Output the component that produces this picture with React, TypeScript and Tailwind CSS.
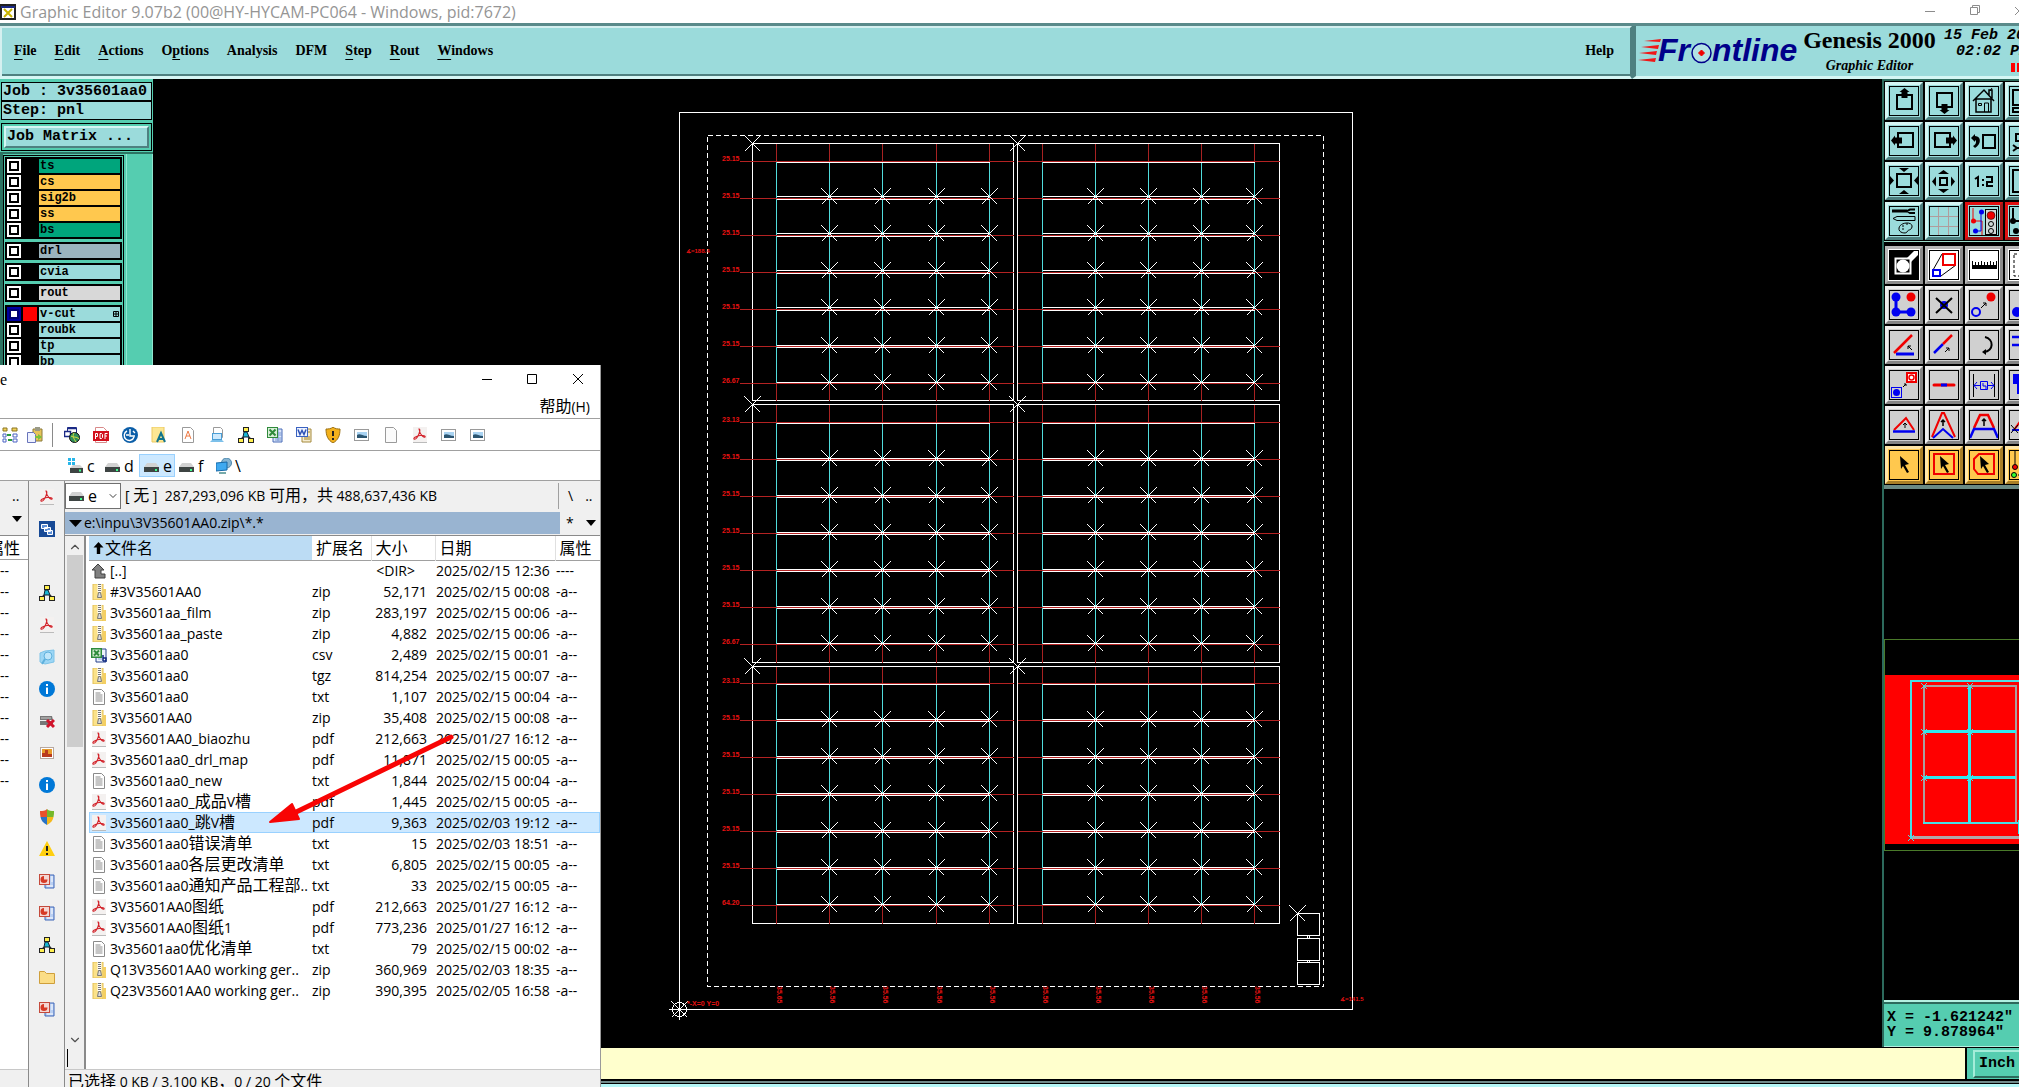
import type { ReactNode } from "react";
import { ChevronDown, ChevronUp } from "lucide-react";

const RED = "#f00000";
const BLUE = "#0000f0";

/* ---------- data ---------- */

const MENUS = [
  ["", "F", "ile"],
  ["", "E", "dit"],
  ["", "A", "ctions"],
  ["O", "p", "tions"],
  ["Analysis", "", ""],
  ["DFM", "", ""],
  ["", "S", "tep"],
  ["", "R", "out"],
  ["", "W", "indows"],
];

type Layer = { name: string; bg: string; active?: boolean };

const LAYER_GROUPS: Layer[][] = [
  [
    { name: "ts", bg: "bg-[#00a57c]" },
    { name: "cs", bg: "bg-[#ffc84e]" },
    { name: "sig2b", bg: "bg-[#ffc84e]" },
    { name: "ss", bg: "bg-[#ffc84e]" },
    { name: "bs", bg: "bg-[#00a57c]" },
  ],
  [{ name: "drl", bg: "bg-[#9ab4be]" }],
  [{ name: "cvia", bg: "bg-[#9bdbdb]" }],
  [{ name: "rout", bg: "bg-[#d8d8d8]" }],
  [
    { name: "v-cut", bg: "bg-[#9bdbdb]", active: true },
    { name: "roubk", bg: "bg-[#9bdbdb]" },
    { name: "tp", bg: "bg-[#9bdbdb]" },
    { name: "bp", bg: "bg-[#9bdbdb]" },
  ],
];

const FILES = [
  ["up", "[..]", "", "<DIR>", "2025/02/15 12:36", "----"],
  ["zip", "#3V35601AA0", "zip", "52,171", "2025/02/15 00:08", "-a--"],
  ["zip", "3v35601aa_film", "zip", "283,197", "2025/02/15 00:06", "-a--"],
  ["zip", "3v35601aa_paste", "zip", "4,882", "2025/02/15 00:06", "-a--"],
  ["csv", "3v35601aa0", "csv", "2,489", "2025/02/15 00:01", "-a--"],
  ["zip", "3v35601aa0", "tgz", "814,254", "2025/02/15 00:07", "-a--"],
  ["txt", "3v35601aa0", "txt", "1,107", "2025/02/15 00:04", "-a--"],
  ["zip", "3V35601AA0", "zip", "35,408", "2025/02/15 00:08", "-a--"],
  ["pdf", "3V35601AA0_biaozhu", "pdf", "212,663", "2025/01/27 16:12", "-a--"],
  ["pdf", "3v35601aa0_drl_map", "pdf", "11,871", "2025/02/15 00:05", "-a--"],
  ["txt", "3v35601aa0_new", "txt", "1,844", "2025/02/15 00:04", "-a--"],
  ["pdf", "3v35601aa0_成品V槽", "pdf", "1,445", "2025/02/15 00:05", "-a--"],
  ["pdf", "3v35601aa0_跳V槽", "pdf", "9,363", "2025/02/03 19:12", "-a--"],
  ["txt", "3v35601aa0错误清单", "txt", "15", "2025/02/03 18:51", "-a--"],
  ["txt", "3v35601aa0各层更改清单", "txt", "6,805", "2025/02/15 00:05", "-a--"],
  ["txt", "3v35601aa0通知产品工程部..", "txt", "33", "2025/02/15 00:05", "-a--"],
  ["pdf", "3V35601AA0图纸", "pdf", "212,663", "2025/01/27 16:12", "-a--"],
  ["pdf", "3V35601AA0图纸1", "pdf", "773,236", "2025/01/27 16:12", "-a--"],
  ["txt", "3v35601aa0优化清单", "txt", "79", "2025/02/15 00:02", "-a--"],
  ["zip", "Q13V35601AA0 working ger..", "zip", "360,969", "2025/02/03 18:35", "-a--"],
  ["zip", "Q23V35601AA0 working ger..", "zip", "390,395", "2025/02/05 16:58", "-a--"],
];
const SELECTED_ROW = 12;

/* ---------- file manager icons, 16x16 ---------- */

const ICONS: Record<string, ReactNode> = {
  up: <path d="M7 1l6 6h-3v4h4v4H4V7H1z" fill="#808080" stroke="#404040" />,
  zip: (
    <>
      <path d="M2 0h10v16H2z" fill="#fbe28a" stroke="#e3bf55" />
      <path d="M12 5h3v11h-3z" fill="#f4cf63" />
      <path d="M8.500 0v8" stroke="#fff" strokeWidth="4" />
      <path d="M8.500 0v8" stroke="#777" strokeWidth="3" strokeDasharray="1 1" />
      <path d="M7.500 8.500h2l1 5h-4z" fill="#ddd" stroke="#777" />
    </>
  ),
  csv: (
    <>
      <path d="M5 2h10v13H5z" fill="#eef3fb" stroke="#27408b" />
      <path d="M7 12h4" stroke="#8aa6d8" />
      <rect x="0" y="1" width="11" height="10" fill="#2e8b3c" />
      <rect x="1.500" y="2.500" width="8" height="7" fill="#d9efd8" />
      <path d="M3 3.500l5 5M8 3.500l-5 5" stroke="#2e8b3c" strokeWidth="2" />
      <path d="M12 8v6M12 11h3v3h-3" fill="none" stroke="#102a80" strokeWidth="1.5" />
    </>
  ),
  txt: (
    <>
      <path d="M2.5.5h8l3 3v12h-11z" fill="#fff" stroke="#8a8a8a" />
      <path d="M4.5 4h5M4.5 6h7M4.5 8h7M4.5 10h7M4.5 12h7" stroke="#8c8c8c" />
    </>
  ),
  pdf: (
    <>
      <rect x="1" y="0" width="14" height="15" fill="#f4f1f0" />
      <path d="M1 15.5h14" stroke="#bbb" />
      <path d="M7 2c2 0 0 5-1 7s-3 4-4 3 3-3 6-3.500 6 .5 5 1.500-5-2-6-8z" fill="none" stroke="#d3222a" strokeWidth="1.100" />
    </>
  ),
  blank: <path d="M2.500.5h8l3 3v12h-11z" fill="#fbfbfb" stroke="#9a9a9a" />,
  fontdoc: (
    <>
      <path d="M2.500.5h8l3 3v12h-11z" fill="#fff" stroke="#9a9a9a" />
      <path d="M5 12l3-8 3 8M6 9h4" fill="none" stroke="#ee7a45" />
    </>
  ),
  font: (
    <>
      <path d="M1 0h12v15H1z" fill="#fce794" stroke="#ecc961" />
      <path d="M6 15l4-9 4 9M8 12h5" fill="none" stroke="#11748c" strokeWidth="2" />
    </>
  ),
  pdfred: (
    <>
      <path d="M2.500.5h8l3 3v12h-11z" fill="#fff" stroke="#d98a8a" />
      <rect x="0" y="4" width="16" height="10" fill="#d2101d" />
      <path d="M2.500 12V6.500h2v3h-2M7 6.500v5h1.500l1-1v-3l-1-1zM12 12V6.500h2.500M12 9h2" fill="none" stroke="#fff" />
    </>
  ),
  sync: (
    <>
      <circle cx="8" cy="8" r="8" fill="#0b5ea8" />
      <path d="M8 2v7h5M5 4a5 5 0 1 0 7 6M4 8h3M11 4l2 2" fill="none" stroke="#fff" strokeWidth="1.400" />
    </>
  ),
  laptop: (
    <>
      <path d="M4.500.5h7l2 2v8h-9z" fill="#fff" stroke="#9a9a9a" />
      <rect x="3.500" y="6.500" width="9" height="6" fill="#cfeafd" stroke="#4b9fd6" />
      <path d="M1 15l2-2h10l2 2z" fill="#7cc0ea" />
    </>
  ),
  tree: (
    <>
      <path d="M8 4v5M3 12l5-4 5 4" fill="none" stroke="#222" strokeWidth="1.500" />
      <path d="M6 5h3l2 5H5z" fill="#19b6d2" stroke="#123" />
      <rect x="5.500" y=".5" width="5" height="4" fill="#ffef4e" stroke="#222" />
      <rect x=".5" y="11.500" width="5" height="4" fill="#ffef4e" stroke="#222" />
      <rect x="10.500" y="11.500" width="5" height="4" fill="#ffef4e" stroke="#222" />
    </>
  ),
  excel: (
    <>
      <path d="M6 2h9v13H6z" fill="#dbe6fa" stroke="#4b6cb8" />
      <path d="M10 6h5M10 8h5M8 11h7M8 13h7M11 3v11" stroke="#7c9ad2" />
      <rect x=".5" y=".5" width="10" height="10" fill="#d9efd8" stroke="#2f8a3b" />
      <path d="M2.500 2.500l6 6M8.500 2.500l-6 6" stroke="#2f8a3b" strokeWidth="2" />
    </>
  ),
  word: (
    <>
      <path d="M6 2h9v13H6z" fill="#f6ecd0" stroke="#a58a3c" />
      <path d="M8 12h6M8 10h6M12 5h2" stroke="#c0a559" strokeWidth="1.500" />
      <rect x=".5" y=".5" width="11" height="9" fill="#eef3ff" stroke="#3a62c0" />
      <path d="M2 2.500l2 5 2-4 2 4 2-5" fill="none" stroke="#2b50b4" strokeWidth="1.500" />
    </>
  ),
  ppt: (
    <>
      <path d="M6 2h9v13H6z" fill="#b9cff2" stroke="#3e67b8" />
      <path d="M12 4h2M12 6h2M12 8h2M8 13h6" stroke="#fff" />
      <rect x=".5" y="1.500" width="10" height="10" fill="#f4d7d3" stroke="#c44a3c" />
      <path d="M5 3a3.500 3.500 0 1 0 3.500 3.500H5z" fill="#d63a26" />
    </>
  ),
  shield: (
    <>
      <path d="M8 0c2 2 5 2 7 2 0 7-2 11-7 14C3 13 1 9 1 2c2 0 5 0 7-2z" fill="#f3b11c" stroke="#9a6f10" />
      <path d="M8 4v5M8 11v2" stroke="#222" strokeWidth="2" />
    </>
  ),
  picture: (
    <>
      <rect x=".5" y="2.500" width="14" height="11" fill="#fff" stroke="#9a9a9a" />
      <path d="M3 5h10v6H3z" fill="#a9d3f2" />
      <path d="M3 8c3-2 5 1 10 1v2H3z" fill="#2c5570" />
    </>
  ),
  globe: (
    <>
      <path d="M3.500.5h9v7h-9z" fill="#fff" stroke="#1b2a86" />
      <path d="M.5 4.500h6v5h-6zM3 1.500h9" fill="#fff" stroke="#1b2a86" strokeWidth="1.500" />
      <circle cx="10.500" cy="10.500" r="5" fill="#2f8f5a" stroke="#111" />
      <path d="M7 9c3 2 5 0 8 3M10 6c-2 3 0 6 2 9" fill="none" stroke="#d8dc40" />
    </>
  ),
  grid: (
    <>
      <path d="M1 1h4v3H1zM10 1h5v3h-5z" fill="#f2d25c" stroke="#8a7420" />
      <path d="M1 7h3v3H1zM11 7h4v3h-4zM1 12h3v3H1zM11 12h4v3h-4z" fill="#fff" stroke="#4b62c4" />
      <path d="M5 8h4M10 13H6" stroke="#2c9c3d" strokeWidth="2" />
    </>
  ),
  paste: (
    <>
      <path d="M6 2h9v12H6z" fill="#e6c35a" stroke="#8b7a3c" />
      <path d="M8 0h5v4H8z" fill="#9a9a86" />
      <path d="M.5 5.500h6l2 2v8h-8z" fill="#eef1ff" stroke="#6874ba" />
      <path d="M8 9h3V7l4 3-4 3v-2H8z" fill="#79c23c" />
    </>
  ),
  windows: (
    <>
      <rect width="16" height="16" fill="#174a96" />
      <path d="M2.500 3.500h6v4h-6zM5.500 6.500h6v4h-6zM8.500 9.500h5v4h-5z" fill="#5d8fd6" stroke="#fff" />
    </>
  ),
  search: (
    <>
      <path d="M1 4l5-2 9-1v12l-9 2-5-2z" fill="#9cd6f5" stroke="#7cc3e8" />
      <circle cx="9" cy="7" r="4" fill="#bfe6fa" stroke="#5fb0dc" />
      <path d="M6 10l-3 5" stroke="#5fb0dc" strokeWidth="2" />
    </>
  ),
  info: (
    <>
      <circle cx="8" cy="8" r="8" fill="#0078d7" />
      <path d="M8 6.500V13M8 3v2" stroke="#fff" strokeWidth="2" />
    </>
  ),
  server: (
    <>
      <path d="M1 3h12l1 4H1zM1 8h13v4H1z" fill="#777" />
      <path d="M2 5h10" stroke="#ccc" />
      <path d="M8 7l7 7M15 7l-7 7" stroke="#d1132b" strokeWidth="3" />
    </>
  ),
  photo: (
    <>
      <rect x="1.500" y="2.500" width="13" height="11" fill="#fff" stroke="#b7a8a0" />
      <rect x="3" y="4" width="10" height="8" fill="#e79a2a" />
      <path d="M3 12V8h3v-3h3v4h4v3z" fill="#b93a1e" />
    </>
  ),
  uac: (
    <>
      <path d="M8 0v8H1.500C1 6 1 4 1 2c3 0 5 0 7-2z" fill="#e8512b" />
      <path d="M8 0v8h6.500C15 6 15 4 15 2c-3 0-5 0-7-2z" fill="#76b82a" />
      <path d="M8 8v8c-4-2-6-5-6.500-8z" fill="#2a73c5" />
      <path d="M8 8v8c4-2 6-5 6.500-8z" fill="#f5b81b" />
    </>
  ),
  warn: (
    <>
      <path d="M8 0l8 15H0z" fill="#ffcf10" />
      <path d="M8 5v5M8 12v2" stroke="#222" strokeWidth="2" />
    </>
  ),
  folder: <path d="M.5 2.500h5l2 2h8v10H.5z" fill="#fbdd86" stroke="#cf9f3b" />,
  drive: (
    <>
      <path d="M3 5h9l3 4H0z" fill="#d2d2d2" />
      <path d="M0 9h15v5H0z" fill="#3e4443" />
      <path d="M11 12h2" stroke="#3dff8c" strokeWidth="2" />
    </>
  ),
  sysdrive: (
    <>
      <path d="M0 0h3v3H0zM4 0h3v3H4zM0 4h3v3H0zM4 4h3v3H4z" fill="#27b6ea" />
      <path d="M5 7h7l3 3H2z" fill="#d2d2d2" />
      <path d="M2 10h13v5H2z" fill="#3e4443" />
      <path d="M11 12.500h2" stroke="#3dff8c" strokeWidth="2" />
    </>
  ),
  network: (
    <>
      <circle cx="10.500" cy="5" r="5" fill="#86b4d2" stroke="#4a86ac" />
      <path d="M0 5l11-1v8L0 13z" fill="#3fa9f0" stroke="#1769a8" />
      <path d="M3 15h7" stroke="#7aa" strokeWidth="2" />
    </>
  ),
};

function FileIcon({ name }: { name: string }) {
  return (
    <svg width="16" height="16" viewBox="0 0 16 16" className="shrink-0" aria-hidden>
      {ICONS[name]}
    </svg>
  );
}

/* ---------- editor tool icons, 30x30 ---------- */

const traffic = (
  <>
    <path d="M4 2v13h9v14M4 2" fill="none" stroke={RED} />
    <path d="M12 5v20H6" fill="none" stroke={BLUE} />
    <circle cx="4.500" cy="15" r="2.500" fill={RED} />
    <circle cx="12.500" cy="6" r="2.500" fill={BLUE} />
    <circle cx="6.500" cy="25" r="2.500" fill={BLUE} />
    <rect x="16.500" y="3.500" width="11" height="25" fill="#d0d8d8" stroke="#000" />
    <circle cx="22" cy="9.500" r="4" fill={RED} stroke="#000" strokeWidth=".5" />
    <circle cx="22" cy="18" r="2.500" fill="none" stroke="#000" />
    <circle cx="22" cy="25" r="2.500" fill="none" stroke="#000" />
  </>
);

const TOP_TOOLS: { label: string; art: ReactNode; hot?: boolean }[] = [
  {
    label: "Pan up",
    art: (
      <>
        <rect x="8" y="9" width="15" height="14" fill="none" stroke="#000" strokeWidth="2" />
        <path d="M15.500 2l5 4h-2v6h-6V6h-2z" />
      </>
    ),
  },
  {
    label: "Pan down",
    art: (
      <>
        <rect x="8" y="7" width="15" height="14" fill="none" stroke="#000" strokeWidth="2" />
        <path d="M15.500 28l5-4h-2v-6h-6v6h-2z" />
      </>
    ),
  },
  {
    label: "Home",
    art: (
      <>
        <path d="M4 15L15 4l10 11M7 13v13h15V13H7M20 9V4h3v8" fill="none" stroke="#000" strokeWidth="1.500" />
        <path d="M9.500 17.500h3v2h-3zM15.500 26v-9h4v9M21 5l2-3" fill="none" stroke="#000" />
      </>
    ),
  },
  { label: "Window", art: <path d="M4 4h22v15H4zM4 22h22v4H4z" fill="none" stroke="#000" strokeWidth="2" /> },
  {
    label: "Pan left",
    art: (
      <>
        <rect x="9" y="7" width="15" height="14" fill="none" stroke="#000" strokeWidth="2" />
        <path d="M2 14.500l4-5v2h7v6H6v2z" />
      </>
    ),
  },
  {
    label: "Pan right",
    art: (
      <>
        <rect x="6" y="7" width="15" height="14" fill="none" stroke="#000" strokeWidth="2" />
        <path d="M28 14.500l-4-5v2h-7v6h7v2z" />
      </>
    ),
  },
  {
    label: "Previous view",
    art: (
      <>
        <rect x="14" y="9" width="12" height="13" fill="none" stroke="#000" strokeWidth="2" />
        <path d="M2 12l4-4v2c7 0 6 9 0 12l-2-2c3-1 4-5 2-6v2z" />
      </>
    ),
  },
  { label: "Zoom", art: <path d="M7 8h12v7H7zM4 19l4 3-4 3M8 22h16" fill="none" stroke="#000" strokeWidth="2" /> },
  {
    label: "Zoom out",
    art: (
      <>
        <rect x="8" y="8" width="14" height="13" fill="none" stroke="#000" strokeWidth="2" />
        <path d="M15 6l-5-4h10zM15 24l-5 4h10zM5 14.500L1 10v9zM25 14.500l4-4.500v9z" />
      </>
    ),
  },
  {
    label: "Zoom in",
    art: (
      <>
        <rect x="11" y="12" width="7" height="7" fill="none" stroke="#000" strokeWidth="2" />
        <path d="M14.500 4L9 8h11zM14.500 27L9 23h11zM3 15.500l4-5v10zM26 15.500l-4-5v10z" />
      </>
    ),
  },
  {
    label: "Scale 1:2",
    art: <path d="M6 13l3-2v10M13 14h2M13 19h2M17 11h6v5h-5v4h6" fill="none" stroke="#000" strokeWidth="2" />,
  },
  { label: "Fit", art: <path d="M4 4h22v22H4z" fill="none" stroke="#000" strokeWidth="2" /> },
  {
    label: "Attributes",
    art: (
      <>
        <path d="M3 5h15" stroke="#000" strokeWidth="3" />
        <path d="M26 3.500h-5l-3 1.500 3 2h5" fill="none" stroke="#000" strokeWidth="2" />
        <path d="M4 12.500l4-2h18v4H8zM10 22c1-6 14-7 13-1-1 4-4 2-5 5-1 2-9 1-8-4z" fill="none" stroke="#000" />
        <path d="M13 20h2M17 18h2M13 23h2" stroke="#000" />
      </>
    ),
  },
  { label: "Grid", art: <path d="M9.500 0v30M19.500 0v30M0 10.500h30M0 20.500h30" stroke="#b09c9c" /> },
  { label: "Snap", hot: true, art: traffic },
  {
    label: "Snap off",
    hot: true,
    art: (
      <>
        <path d="M4 2v13h10V11" fill="none" stroke="#000" strokeWidth="2" />
        <circle cx="4" cy="15" r="3" />
        <circle cx="7" cy="25" r="3" />
      </>
    ),
  },
];

const EDIT_TOOLS: { label: string; art: ReactNode; tone?: "white" | "gold" }[] = [
  {
    label: "Negative",
    tone: "white",
    art: (
      <>
        <rect width="30" height="30" />
        <path d="M18 8l7-7h4v4l-7 7z" fill="#fff" />
        <rect x="6.500" y="8.500" width="15" height="15" stroke="#fff" strokeWidth="2" />
        <circle cx="14" cy="16" r="6.500" fill="#fff" />
      </>
    ),
  },
  {
    label: "Resize",
    tone: "white",
    art: (
      <>
        <path d="M4 20L13 4M12 26l15-11" stroke="#000" />
        <rect x="14" y="4" width="12" height="11" fill="none" stroke={RED} strokeWidth="2" />
        <rect x="4" y="20" width="7" height="6" fill="none" stroke={BLUE} strokeWidth="2" />
      </>
    ),
  },
  {
    label: "Measure",
    tone: "white",
    art: <path d="M3 11h1v4h2v-3h1v3h2v-3h1v3h2v-4h1v4h2v-3h1v3h2v-3h1v3h2v-4h1v4h2v-3h1v3h2v-4h1v8H3z" />,
  },
  { label: "Area", tone: "white", art: <path d="M5 4h20v22H5z" fill="none" stroke="#000" strokeDasharray="3 2" /> },
  {
    label: "Nets",
    art: (
      <>
        <path d="M7 7v15h15" fill="none" stroke={BLUE} strokeWidth="3" />
        <circle cx="7" cy="7" r="4.500" fill={BLUE} />
        <circle cx="7" cy="22" r="4.500" fill={BLUE} />
        <circle cx="22" cy="22" r="4.500" fill={BLUE} />
        <circle cx="22" cy="7" r="4.500" fill={RED} />
      </>
    ),
  },
  {
    label: "Delete",
    art: (
      <>
        <circle cx="15" cy="15" r="4" fill={BLUE} />
        <path d="M7 8l16 15M23 8L7 23" stroke="#000" strokeWidth="2" />
      </>
    ),
  },
  {
    label: "Move",
    art: (
      <>
        <circle cx="7" cy="22" r="4" fill="none" stroke={BLUE} strokeWidth="2" />
        <circle cx="22" cy="7" r="4.500" fill={RED} />
        <path d="M12 18l5-5m-3 0h3v3" fill="none" stroke="#000" />
      </>
    ),
  },
  { label: "Copy", art: <circle cx="8" cy="22" r="5" fill={BLUE} /> },
  {
    label: "Angle",
    art: (
      <>
        <path d="M7 24h18" stroke={BLUE} strokeWidth="3" />
        <path d="M5 23L23 5" stroke={RED} strokeWidth="2.500" />
        <path d="M23 20l-4-4m0 3v-3h3" fill="none" stroke="#000" />
      </>
    ),
  },
  {
    label: "Split line",
    art: (
      <>
        <path d="M5 23l9-9" stroke={BLUE} strokeWidth="2.500" />
        <path d="M14 14l9-9" stroke={RED} strokeWidth="2.500" />
        <path d="M16 22l4-4m-3 0h3v3" fill="none" stroke="#000" />
      </>
    ),
  },
  {
    label: "Rotate",
    art: (
      <>
        <path d="M16 7c9 2 9 14-1 15" fill="none" stroke="#000" strokeWidth="2" />
        <path d="M13 22l4-3v6z" />
      </>
    ),
  },
  { label: "Align", art: <path d="M3 7h20M3 15h20" stroke={BLUE} strokeWidth="2.500" /> },
  {
    label: "Substitute",
    art: (
      <>
        <rect x="18" y="3" width="9" height="9" fill="#fff" stroke={RED} strokeWidth="2" />
        <circle cx="22.500" cy="7.500" r="2.500" fill="none" stroke={RED} strokeWidth="1.500" />
        <rect x="2.500" y="17.500" width="10" height="10" fill="none" stroke={BLUE} />
        <circle cx="7.500" cy="22.500" r="3.500" fill={BLUE} />
        <path d="M14 17l3-3m-2 0h2v2" fill="none" stroke="#000" />
      </>
    ),
  },
  {
    label: "Merge",
    art: (
      <>
        <path d="M5 15h20" stroke={RED} strokeWidth="3" strokeLinecap="round" />
        <path d="M12 15h6" stroke={BLUE} strokeWidth="3" />
      </>
    ),
  },
  {
    label: "Spacing",
    art: (
      <>
        <path d="M4.500 4v23M25.500 4v23" stroke="#000" />
        <path d="M5 15.500h6M8 12l-3 3.500 3 3.500M25 15.500h-6M22 12l3 3.500-3 3.500M11.500 11.500h7v8h-7zM14 13v3h3v3" fill="none" stroke={BLUE} />
      </>
    ),
  },
  { label: "Surface", art: <path d="M4 4h22v10h-8v10H8V14H4z" fill={BLUE} /> },
  {
    label: "Triangle",
    art: (
      <>
        <path d="M5 20L17 8l8 12" fill="none" stroke={RED} strokeWidth="2" />
        <path d="M4 21.500h22" stroke={BLUE} strokeWidth="2.500" />
        <path d="M16 18v-5m-2 2l2-2 2 2" fill="none" stroke="#000" />
      </>
    ),
  },
  {
    label: "Peak",
    art: (
      <>
        <path d="M3 27L13 3h2l11 24" fill="none" stroke={RED} strokeWidth="2" />
        <path d="M4 28l10-9 10 9" fill="none" stroke={BLUE} strokeWidth="2" />
        <path d="M14 16v-6m-2 2l2-2 2 2" fill="none" stroke="#000" strokeWidth="1.500" />
      </>
    ),
  },
  {
    label: "Trapezoid",
    art: (
      <>
        <path d="M5 18l6-13h8l6 13" fill="none" stroke={RED} strokeWidth="2.500" />
        <path d="M1 28l4-9h20l4 9" fill="none" stroke={BLUE} strokeWidth="2.500" />
        <path d="M15 16V9m-2 2l2-2 2 2" fill="none" stroke="#000" strokeWidth="1.500" />
      </>
    ),
  },
  {
    label: "Cut",
    art: (
      <>
        <path d="M5 20L17 3" stroke={RED} strokeWidth="2" />
        <path d="M3 20h20" stroke={BLUE} strokeWidth="2" />
        <path d="M2 15l7 8M9 15l-7 8" stroke="#000" />
      </>
    ),
  },
  { label: "Select", tone: "gold", art: <path d="M11 6l9 8-4 1 4 7-2 1-4-7-2 3z" /> },
  {
    label: "Select in box",
    tone: "gold",
    art: (
      <>
        <rect x="5" y="4" width="20" height="20" fill="none" stroke={RED} strokeWidth="2" />
        <path d="M11 6l9 8-4 1 4 7-2 1-4-7-2 3z" />
      </>
    ),
  },
  {
    label: "Select in polygon",
    tone: "gold",
    art: (
      <>
        <path d="M10 4h15v20H9l-4-5V9z" fill="none" stroke={RED} strokeWidth="2" />
        <path d="M11 6l9 8-4 1 4 7-2 1-4-7-2 3z" />
      </>
    ),
  },
  {
    label: "Select net",
    tone: "gold",
    art: (
      <>
        <path d="M6 0v14M9 25h8V5" fill="none" stroke="#000" />
        <circle cx="6" cy="17" r="2.500" fill={RED} stroke="#000" />
        <circle cx="5" cy="25" r="2.500" fill="#3f3" stroke="#000" />
      </>
    ),
  },
];

const TONES = {
  cyan: "bg-[#9bdbdb] border-t-[#d5f6f4] border-l-[#d5f6f4] border-r-[#4e8080] border-b-[#4e8080]",
  hot: "bg-[#9bdbdb] border-t-[#e01010] border-l-[#e01010] border-r-[#a01818] border-b-[#a01818]",
  white: "bg-white border-t-[#b8b8b8] border-l-[#b8b8b8] border-r-[#8c8c8c] border-b-[#8c8c8c]",
  gray: "bg-[#d0d0d0] border-t-[#f0f0f0] border-l-[#f0f0f0] border-r-[#858585] border-b-[#858585]",
  gold: "bg-[#ffc84e] border-t-[#ffe6a8] border-l-[#ffe6a8] border-r-[#a87f28] border-b-[#a87f28]",
};

function ToolButton({ label, tone, art }: { label: string; tone: keyof typeof TONES; art: ReactNode }) {
  return (
    <button aria-label={label} className={`flex h-[38px] w-[38px] items-center justify-center border-[3px] ${TONES[tone]}`}>
      <svg width="30" height="30" viewBox="0 0 30 30" className="shrink-0">
        {art}
        <rect x=".5" y=".5" width="29" height="29" fill="none" stroke="#000" />
      </svg>
    </button>
  );
}

/* ---------- header ---------- */

function TitleBar() {
  return (
    <div className="flex h-[23px] shrink-0 items-center overflow-hidden bg-white font-['Open_Sans','Noto_Sans',sans-serif] text-base leading-5 text-[#959595]">
      <svg width="16" height="16" viewBox="0 0 16 16" className="mr-1 shrink-0">
        <rect x="1" y="1" width="14" height="14" fill="#fff" stroke="#222" strokeWidth="2" />
        <path d="M1 3h14" stroke="#1b2a86" strokeWidth="2" />
        <path d="M4 5l8 8M12 5l-8 8" stroke="#c9b400" strokeWidth="2" />
      </svg>
      <span className="grow whitespace-nowrap">Graphic Editor 9.07b2 (00@HY-HYCAM-PC064 - Windows, pid:7672)</span>
      <svg width="98" height="20" viewBox="0 0 98 20" fill="none" stroke="#8c8c8c" className="shrink-0">
        <path d="M4 9.500h10M49.500 5.500h7v7h-7zM51.500 5.500v-2h7v7h-2M94 5l8 8M102 5l-8 8" />
      </svg>
    </div>
  );
}

function MenuBar() {
  return (
    <div className="flex h-14 shrink-0 overflow-hidden border-t-[3px] border-t-[#5a8a8a] bg-[#9bdbdb] font-['Liberation_Serif',serif] text-sm font-bold text-black">
      <nav className="flex grow items-center gap-[18px] border-2 border-b-[3px] border-t-[#d5f0f0] border-l-[#d5f0f0] border-r-[#4e8080] border-b-[#d5f6f4] pr-4 pb-0.5 pl-3 shadow-[inset_0_-2px_0_#4e8080]">
        {MENUS.map(([pre, key, post]) => (
          <button key={pre + key + post}>
            {pre}
            <span className="underline underline-offset-4">{key}</span>
            {post}
          </button>
        ))}
        <button className="ml-auto">Help</button>
      </nav>
      <div className="flex w-[387px] shrink-0 overflow-hidden border-l-4 border-b-[3px] border-l-[#4e8080] border-b-[#d5f6f4]">
        <svg width="163" height="50" viewBox="1636 26 163 50" className="shrink-0">
          <g fill="#f01818">
            <path d="M1644 41l17-2-1 3zM1641 47l18-2-1 4zM1639 53l18-2-1 4zM1638 60l18-2-1 4z" />
          </g>
          <g fontFamily="Liberation Sans, sans-serif" fontSize="32" fontWeight="700" fontStyle="italic" fill="#00008a">
            <text x="1658" y="61">Fr</text>
            <text x="1712" y="61">ntline</text>
          </g>
          <circle cx="1701.500" cy="53" r="9.500" fill="#b4e2e4" stroke="#00008a" strokeWidth="1.500" />
          <path d="M1701.500 50l3 3-3 3-3-3z" fill={RED} stroke={RED} />
        </svg>
        <div className="w-[141px] shrink-0 text-center">
          <div className="text-2xl leading-7">Genesis 2000</div>
          <div className="text-sm leading-6 italic">Graphic Editor</div>
        </div>
        <div className="shrink-0 pt-0.5 pl-1 font-['Liberation_Mono',monospace] text-[15px] leading-4 whitespace-pre italic">
          <div>15 Feb 2025</div>
          <div className="pl-3">02:02 PM</div>
          <div className="mt-[3px] ml-[67px] h-[9px] w-4 bg-[repeating-linear-gradient(90deg,#f00_0_4px,transparent_4px_6px)]" />
        </div>
      </div>
    </div>
  );
}

/* ---------- layer list ---------- */

function LayerPanel() {
  return (
    <aside className="flex w-[153px] shrink-0 flex-col bg-[#55cdb0] font-['Liberation_Mono',monospace] font-bold text-black">
      <div className="border-b-2 border-b-[#2c7362] px-px pt-[3px] pb-px text-[15px]">
        <div className="h-[19px] border border-black bg-[#9bdbdb] pl-px leading-[18px] whitespace-pre">Job : 3v35601aa0</div>
        <div className="mb-[3px] h-[19px] border border-black bg-[#9bdbdb] pl-px leading-[18px] whitespace-pre">Step: pnl</div>
        <div className="border border-black p-0.5">
          <button className="block h-[22px] w-full border-2 border-t-[#d5f6f4] border-l-[#d5f6f4] border-r-[#4e8080] border-b-[#4e8080] bg-[#9bdbdb] pl-px text-left leading-4 whitespace-pre">
            Job Matrix ...
          </button>
        </div>
      </div>
      <div className="flex grow">
        <div className="flex w-[124px] flex-col border-l-[3px] border-[#2c7362] pt-px">
          <div className="flex grow flex-col gap-[3px] border-t border-x border-black px-px pt-px">
            {LAYER_GROUPS.map((group) => (
              <div key={group[0].name} className="flex flex-col gap-0.5 bg-black p-0.5">
                {group.map((layer) => (
                  <label key={layer.name} className="flex h-3.5 items-center">
                    <input
                      type="checkbox"
                      defaultChecked={layer.active}
                      className="h-3.5 w-3.5 appearance-none border-2 border-white bg-white shadow-[inset_0_0_0_2px_#000] checked:border-[#0000a0] checked:shadow-[inset_0_0_0_2px_#000070]"
                    />
                    <span className={`mx-0.5 h-3.5 w-3.5 ${layer.active ? "bg-[#f00]" : "bg-black"}`} />
                    <span className={`flex h-3.5 grow items-center justify-between pl-px text-xs leading-3 ${layer.bg}`}>
                      {layer.name}
                      {layer.active && (
                        <svg width="7" height="7" viewBox="0 0 7 7">
                          <path d="M.5.5h5v5h-5zM3 0v6M0 3h6" fill="none" stroke="#000" />
                        </svg>
                      )}
                    </span>
                  </label>
                ))}
              </div>
            ))}
          </div>
        </div>
        <div className="ml-0.5 grow border-l border-r border-l-[#8fe6d0] border-r-[#8fe6d0]" />
      </div>
    </aside>
  );
}

/* ---------- panel drawing ---------- */

const PANEL_X = [752.5, 1017.5];
const PANEL_ROWS = [
  { top: 143.5, firstCut: 161.5, bottom: 400.5 },
  { top: 404.5, firstCut: 422.5, bottom: 662.5 },
  { top: 666.5, firstCut: 683.5, bottom: 923.5 },
];
const ROUT_X = [
  [776.5, 829.5, 882.5, 936.5, 989.5],
  [1042.5, 1095.5, 1148.5, 1201.5, 1254.5],
];
const CUTS = [0, 1, 2, 3, 4, 5, 6];

const cross = (x: number, y: number) => `M${x - 8} ${y - 8}l16 16M${x + 8} ${y - 8}l-16 16`;

function cutLabel(panel: number, cut: number) {
  if (cut === 0 && panel > 0) return "23.13";
  if (cut === 6) return panel === 2 ? "64.20" : "26.67";
  return "25.15";
}

function Panel({ col, row }: { col: number; row: number }) {
  const x = PANEL_X[col];
  const { top, firstCut, bottom } = PANEL_ROWS[row];
  const xs = ROUT_X[col];
  const width = col === 0 ? 261 : 262;
  const last = firstCut + 221;
  return (
    <g fill="none" shapeRendering="crispEdges">
      <rect x={x} y={top} width={width} height={bottom - top} rx="1" stroke="#fff" />
      {xs.map((vx) => (
        <g key={vx}>
          <path d={`M${vx} ${top}V${firstCut}M${vx} ${last}V${bottom}`} stroke="#a82222" />
          <path d={`M${vx} ${firstCut}V${last}`} stroke="#50dcdc" />
        </g>
      ))}
      {CUTS.map((cut) => {
        const y = firstCut + cut * 37;
        const upper = y - (row > 0 || cut > 4 ? 1 : 2);
        return (
          <g key={cut}>
            <path d={`M${col === 0 ? 740 : x} ${y}H${x + width}`} stroke="#b42222" />
            {cut > 0 && <path d={`M${xs[0]} ${upper}H${xs[4]}`} stroke="#fff" />}
            {cut < 6 && <path d={`M${xs[0]} ${y + 1}H${xs[4]}`} stroke="#fff" />}
            {cut > 0 && <path d={xs.slice(1).map((vx) => cross(vx, upper)).join("")} stroke="#fff" />}
          </g>
        );
      })}
      <path d={cross(x, top)} stroke="#fff" />
    </g>
  );
}

function Canvas() {
  return (
    <main className="min-w-0 grow overflow-hidden bg-black">
      <svg viewBox="153 79 1729 968" className="h-full w-full">
        <g fill="none" stroke="#fff" shapeRendering="crispEdges">
          <rect x="679.5" y="112.5" width="673" height="897" />
          <rect x="707.5" y="135.5" width="616" height="851" strokeDasharray="5 3" />
          <path d="M1297.500 913.500h22v22h-22zM1297.500 938.500h22v22h-22zM1297.500 962.500h22v22h-22zM1307.500 935v3M1309.500 935v3M1307.500 960v3M1309.500 960v3" />
          <path d={cross(1297.5, 913.5)} />
          <path d={cross(679.5, 1009.5)} />
          <path d="M669 1009.500h21M679.500 999v21" />
          <circle cx="679.5" cy="1009.5" r="7" />
        </g>
        {PANEL_ROWS.map((_, row) => PANEL_X.map((x, col) => <Panel key={`${x}-${row}`} col={col} row={row} />))}
        <g fill="#e81212" fontFamily="Liberation Sans, sans-serif" fontSize="7" fontWeight="700">
          {PANEL_ROWS.map(({ firstCut }, row) =>
            CUTS.map((cut) => (
              <text key={`${row}-${cut}`} x="722" y={firstCut - 1 + cut * 37}>
                {cutLabel(row, cut)}
              </text>
            )),
          )}
          {ROUT_X.flat().map((x, i) => (
            <text key={x} transform={`translate(${x} 986) rotate(90)`}>
              {i === 0 ? "35.65" : "35.56"}
            </text>
          ))}
          <g fontSize="6">
            <text x="686" y="253">∡=188.4</text>
            <text x="1340" y="1001">∡=141.5</text>
          </g>
          <text x="687" y="1006">*-X=0 Y=0</text>
        </g>
      </svg>
    </main>
  );
}

/* ---------- right side ---------- */

function Overview() {
  return (
    <svg width="136" height="212" viewBox="1884 639 136 212" className="mt-[150px] shrink-0">
      <g fill="none" shapeRendering="crispEdges">
        <path d="M1885 675h140v169h-140z" fill="#f00" />
        <path d="M2025 639.500h-140.500v211H2025" stroke="#4a7a2a" />
        <path d="M1912 837.500h113" stroke="#b0a8a8" strokeWidth="3" />
        <path d="M2025 681h-114v158" stroke="#46e0e6" strokeWidth="2" />
        <path d="M1924 822V686h92v136" stroke="#aaa0a0" strokeWidth="2" />
        <path d="M1923 822.500h95" stroke="#46e0e6" strokeWidth="2" />
        <path d="M1924 731.500h92M1924 777.500h92M1969.500 686v136" stroke="#30e8f0" strokeWidth="3" />
        {[686, 732, 778].map((y) =>
          [1924, 1970].map((x) => <path key={`${x}-${y}`} d={`M${x - 3} ${y - 3}l6 6M${x + 3} ${y - 3}l-6 6`} stroke="#46e0e6" />),
        )}
        <path d="M1908 835l6 6M1914 835l-6 6" stroke="#46e0e6" />
        <path d="M2018 820h2v14h-2z" fill="#30e8f0" />
      </g>
    </svg>
  );
}

function ToolPanel() {
  return (
    <aside className="flex w-[137px] shrink-0 flex-col overflow-hidden border-l-2 border-[#2c6a5c] bg-black">
      <div className="grid grid-cols-[repeat(4,38px)] gap-0.5 border-t-2 border-b border-t-[#2c6a5c] border-b-[#9bdbc8] pt-px pb-px pl-px">
        {TOP_TOOLS.map(({ label, art, hot }) => (
          <ToolButton key={label} label={label} tone={hot ? "hot" : "cyan"} art={art} />
        ))}
      </div>
      <div className="mt-[3px] grid grid-cols-[repeat(4,38px)] gap-0.5 border-b-4 border-b-[#6a8a84] pt-px pb-px pl-px">
        {EDIT_TOOLS.map(({ label, art, tone }) => (
          <ToolButton key={label} label={label} tone={tone ?? "gray"} art={art} />
        ))}
      </div>
      <Overview />
      <div className="mt-auto h-[47px] shrink-0 border-t-2 border-b border-[#b4f0e0] bg-[#55cdb0] pt-2 pl-[3px] font-['Liberation_Mono',monospace] text-[15px] leading-[15px] font-bold whitespace-pre text-black shadow-[inset_0_2px_0_#2c6a5c]">
        <div>X = -1.621242"</div>
        <div>Y = 9.878964"</div>
      </div>
    </aside>
  );
}

function CommandLine() {
  return (
    <footer className="h-10 shrink-0 border-t border-black bg-black font-['Liberation_Mono',monospace] text-[15px] font-bold">
      <div className="flex h-[31px]">
        <input aria-label="Command" className="min-w-0 grow bg-[#ffffcd] outline-none" />
        <div className="ml-0.5 w-[52px] overflow-hidden bg-[#55cdb0] pt-0.5 pl-1.5">
          <button className="h-7 w-16 border-2 border-t-[#a4ecd9] border-l-[#a4ecd9] border-r-[#2c6a5c] border-b-[#2c6a5c] pt-px pl-1 text-left">
            Inch
          </button>
        </div>
      </div>
      <div className="mt-0.5 h-0.5 bg-[#6f8a8a]" />
      <div className="mt-px h-[3px] bg-[#b4f6f6]" />
    </footer>
  );
}

/* ---------- file manager window ---------- */

const TOOLBAR = [
  "globe", "pdfred", "sync", "font", "fontdoc", "laptop", "tree", "excel",
  "word", "shield", "picture", "blank", "pdf", "picture", "picture",
];
const STRIP = [
  "pdf", "windows", "", "tree", "pdf", "search", "info", "server", "photo",
  "info", "uac", "warn", "ppt", "ppt", "tree", "folder", "ppt",
];
const DRIVES = [
  ["sysdrive", "c"],
  ["drive", "d"],
  ["drive", "e"],
  ["drive", "f"],
  ["network", "\\"],
];

/* Han glyphs are set one step larger than the Latin around them. */
function Mixed({ text }: { text: string }) {
  return text.split(/([\u4e00-\u9fff，]+)/).map((part, i) =>
    i % 2 ? (
      <span key={i} className="text-base leading-none">
        {part}
      </span>
    ) : (
      part
    ),
  );
}

function DownTriangle() {
  return (
    <svg width="10" height="6" viewBox="0 0 10 6" className="shrink-0">
      <path d="M0 0h10L5 6z" />
    </svg>
  );
}

function LeftPane() {
  return (
    <div className="flex w-[29px] shrink-0 flex-col overflow-hidden border-r border-[#8a8a8a]">
      <div className="flex h-[54px] shrink-0 flex-col pt-1 pl-3">
        <button className="h-[22px] text-left leading-5">..</button>
        <span className="flex h-6 items-center">
          <DownTriangle />
        </span>
      </div>
      <div className="flex grow flex-col border-t border-[#8a8a8a] bg-white">
        <div className="flex h-6 shrink-0 items-center justify-end border-b border-[#a0a0a0] pr-2 text-base whitespace-nowrap">属性</div>
        {FILES.slice(0, 11).map((_, i) => (
          <div key={i} className="h-[21px] shrink-0 leading-[21px]">
            --
          </div>
        ))}
      </div>
      <div className="h-[18px] shrink-0 border-t border-[#c8c8c8]" />
    </div>
  );
}

function FileTable() {
  return (
    <table className="w-full table-fixed border-collapse text-left whitespace-pre">
      <colgroup>
        <col className="w-[223px]" />
        <col className="w-[59px]" />
        <col className="w-16" />
        <col className="w-[120px]" />
        <col />
      </colgroup>
      <thead>
        <tr className="h-6 border-b border-[#a0a0a0] text-base leading-5 [&>th]:p-0 [&>th]:pl-1 [&>th]:font-normal">
          <th className="bg-[#bcdcf4]">
            <span className="flex items-center gap-px">
              <svg width="11" height="12" viewBox="0 0 11 12">
                <path d="M5.500 0l5 5.500H7.200V12H3.800V5.500H.5z" />
              </svg>
              文件名
            </span>
          </th>
          <th>扩展名</th>
          <th className="border-l border-[#e0e0e0]">大小</th>
          <th className="border-l border-[#e0e0e0]">日期</th>
          <th className="border-l border-[#e0e0e0]">属性</th>
        </tr>
      </thead>
      <tbody>
        {FILES.map(([icon, name, ext, size, date, attr], i) => (
          <tr
            key={i}
            className={
              i === SELECTED_ROW
                ? "h-[21px] bg-[#cce8ff] leading-5 outline outline-1 -outline-offset-1 outline-[#99d1ff] [&>td]:p-0"
                : "h-[21px] leading-5 [&>td]:p-0"
            }
          >
            <td>
              <span className="flex h-5 items-center gap-[3px] pl-0.5">
                <FileIcon name={icon} />
                <span>
                  <Mixed text={name} />
                </span>
              </span>
            </td>
            <td>{ext}</td>
            <td className="text-right">
              <span className={icon === "up" ? "pr-5" : "pr-2"}>{size}</span>
            </td>
            <td>
              <span className="pl-px">{date}</span>
            </td>
            <td>
              <span className="pl-px">{attr}</span>
            </td>
          </tr>
        ))}
      </tbody>
    </table>
  );
}

function FileManager() {
  return (
    <section className="absolute top-[365px] bottom-0 left-0 flex w-[601px] flex-col overflow-hidden border-r border-[#9a9a9a] bg-white font-['Open_Sans','Noto_Sans_CJK_SC',sans-serif] text-sm text-black">
      <div className="flex h-[30px] shrink-0 items-center justify-between">
        <span className="font-['Liberation_Serif',serif] text-base">e</span>
        <svg width="118" height="30" viewBox="482 365 118 30" fill="none" stroke="#000">
          <path d="M482 379.500h10M527.500 374.500h9v9h-9zM573 374l10 10M583 374l-10 10" />
        </svg>
      </div>
      <div className="flex h-[23px] shrink-0 items-center justify-end pr-2.5">
        <button>
          <Mixed text="帮助(H)" />
        </button>
      </div>
      <div className="flex h-8 shrink-0 items-center border-t border-[#a0a0a0]">
        <button aria-label="Compare" className="flex w-5 justify-center overflow-hidden">
          <FileIcon name="grid" />
        </button>
        <button aria-label="Paste" className="flex w-[29px] justify-center">
          <FileIcon name="paste" />
        </button>
        <span className="mr-1 ml-[3px] h-6 w-px bg-[#8a8a8a]" />
        {TOOLBAR.map((icon, i) => (
          <button key={i} aria-label={icon} className="flex w-[29px] justify-center">
            <FileIcon name={icon} />
          </button>
        ))}
      </div>
      <div className="flex h-[30px] shrink-0 items-center gap-px border-t border-[#a0a0a0] pl-[65px]">
        {DRIVES.map(([icon, letter]) => (
          <button
            key={letter}
            className={
              letter === "e"
                ? "flex h-[23px] w-9 items-center gap-[3px] border border-[#99d1ff] bg-[#cce8ff] pl-1 text-base leading-5"
                : "flex h-[23px] w-9 items-center gap-[3px] pl-[3px] text-base leading-5"
            }
          >
            <FileIcon name={icon} />
            {letter}
          </button>
        ))}
      </div>
      <div className="flex min-h-0 grow border-t border-[#a0a0a0] bg-[#f0f0f0]">
        <LeftPane />
        <div className="flex w-9 shrink-0 flex-col border-r border-[#8a8a8a]">
          {STRIP.map((icon, i) =>
            icon ? (
              <button key={i} aria-label={icon} className="flex h-8 shrink-0 items-center justify-center">
                <FileIcon name={icon} />
              </button>
            ) : (
              <span key={i} className="h-8 shrink-0" />
            ),
          )}
        </div>
        <div className="flex min-w-0 grow flex-col">
          <div className="flex h-[30px] shrink-0 items-center">
            <div className="relative h-[26px] w-14 shrink-0">
              <select aria-label="Drive" className="h-full w-full appearance-none border border-[#707070] bg-white pl-[22px] text-base leading-5">
                <option>e</option>
              </select>
              <span className="pointer-events-none absolute top-1 left-1">
                <FileIcon name="drive" />
              </span>
              <ChevronDown size={12} className="pointer-events-none absolute top-[7px] right-0.5" strokeWidth={1.5} />
            </div>
            <span className="grow pl-1 whitespace-pre">
              <Mixed text="[ 无 ]  287,293,096 KB 可用，共 488,637,436 KB" />
            </span>
            <span className="flex h-[26px] w-[42px] items-center gap-3 border-l border-[#a0a0a0] pl-[9px]">
              <button>\</button>
              <button>..</button>
            </span>
          </div>
          <div className="flex h-6 shrink-0 items-center">
            <button className="flex h-[22px] grow items-center gap-0.5 bg-[#99b4d1] pl-1">
              <svg width="13" height="8" viewBox="0 0 13 8">
                <path d="M0 1h13L6.500 8z" />
              </svg>
              e:\inpu\3V35601AA0.zip\*.*
            </button>
            <span className="flex w-10 items-center gap-3 pl-1.5">
              <button>*</button>
              <DownTriangle />
            </span>
          </div>
          <div className="flex min-h-0 grow border-t border-[#8a8a8a]">
            <div className="flex w-[21px] shrink-0 flex-col border-r-2 border-[#8a8a8a] pl-0.5 pr-px">
              <ChevronUp size={14} className="mt-1 mb-px shrink-0 self-center text-[#505050]" />
              <div className="h-[192px] bg-[#cdcdcd]" />
              <ChevronDown size={14} className="mt-auto mb-0.5 shrink-0 self-center text-[#505050]" />
              <div className="mb-0.5 h-[18px] w-px bg-black" />
            </div>
            <div className="min-w-0 grow bg-white pl-[3px]">
              <FileTable />
            </div>
          </div>
          <div className="h-[18px] shrink-0 border-t border-[#c8c8c8] pl-[3px] leading-6 whitespace-pre">
            <Mixed text="已选择 0 KB / 3,100 KB，0 / 20 个文件" />
          </div>
        </div>
      </div>
      <svg width="190" height="110" viewBox="265 730 190 110" className="pointer-events-none absolute top-[365px] left-[265px]">
        <path d="M451 737L290 815" stroke="#f80404" strokeWidth="5" strokeLinecap="round" />
        <path d="M270 822l22-18 7 15z" fill="#f80404" stroke="#f80404" strokeWidth="2" strokeLinejoin="round" />
      </svg>
    </section>
  );
}

export default function App() {
  return (
    <div className="relative flex h-screen flex-col overflow-hidden bg-black">
      <TitleBar />
      <MenuBar />
      <div className="flex min-h-0 grow">
        <LayerPanel />
        <Canvas />
        <ToolPanel />
      </div>
      <CommandLine />
      <FileManager />
    </div>
  );
}
